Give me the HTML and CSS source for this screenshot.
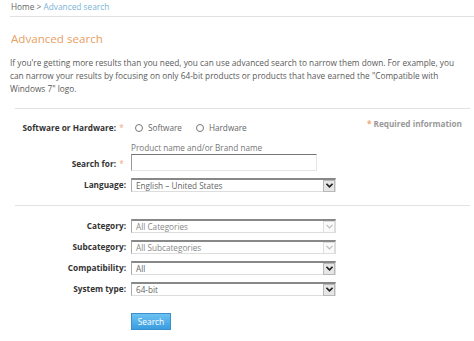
FILE: index.html
```html
<!DOCTYPE html>
<html>
<head>
<meta charset="utf-8">
<link rel="stylesheet" href="styles.css">
</head>
<body>
<div class="page">
  <div class="crumbs"><span class="home">Home</span> <span class="sep">&gt;</span> <span class="current">Advanced search</span></div>
  <h1 class="title">Advanced search</h1>
  <p class="intro">If you're getting more results than you need, you can use advanced search to narrow them down. For example, you can narrow your results by focusing on only 64-bit products or products that have earned the "Compatible with Windows 7" logo.</p>

  <div class="section first">
    <div class="required"><span class="star">*</span> Required information</div>
    <div class="form">
      <div class="label">Software or Hardware:<span class="star-slot">*</span></div>
      <div class="field radios">
        <label class="radio"><span class="dot"></span>Software</label>
        <label class="radio"><span class="dot"></span>Hardware</label>
      </div>

      <div class="label search-label">Search for:<span class="star-slot">*</span></div>
      <div class="field">
        <div class="hint">Product name and/or Brand name</div>
        <div class="text-input"></div>
      </div>

      <div class="label">Language:</div>
      <div class="field">
        <div class="select"><span class="value">English – United States</span><span class="arrow"><svg width="7" height="5" viewBox="0 0 7 5"><path d="M0.5 0.8 L3.5 3.8 L6.5 0.8" fill="none" stroke="#222" stroke-width="1.6"/></svg></span></div>
      </div>
    </div>
  </div>

  <div class="section second">
    <div class="form">
      <div class="label">Category:</div>
      <div class="field"><div class="select disabled"><span class="value">All Categories</span><span class="arrow"><svg width="7" height="5" viewBox="0 0 7 5"><path d="M0.5 0.8 L3.5 3.8 L6.5 0.8" fill="none" stroke="#bbb" stroke-width="1.2"/></svg></span></div></div>

      <div class="label">Subcategory:</div>
      <div class="field"><div class="select disabled"><span class="value">All Subcategories</span><span class="arrow"><svg width="7" height="5" viewBox="0 0 7 5"><path d="M0.5 0.8 L3.5 3.8 L6.5 0.8" fill="none" stroke="#bbb" stroke-width="1.2"/></svg></span></div></div>

      <div class="label">Compatibility:</div>
      <div class="field"><div class="select"><span class="value">All</span><span class="arrow"><svg width="7" height="5" viewBox="0 0 7 5"><path d="M0.5 0.8 L3.5 3.8 L6.5 0.8" fill="none" stroke="#222" stroke-width="1.6"/></svg></span></div></div>

      <div class="label">System type:</div>
      <div class="field"><div class="select"><span class="value">64-bit</span><span class="arrow"><svg width="7" height="5" viewBox="0 0 7 5"><path d="M0.5 0.8 L3.5 3.8 L6.5 0.8" fill="none" stroke="#222" stroke-width="1.6"/></svg></span></div></div>

      <div class="label"></div>
      <div class="field"><button class="btn">Search</button></div>
    </div>
  </div>
</div>
</body>
</html>
```
FILE: styles.css
```css
* { box-sizing: border-box; }
html, body { margin: 0; padding: 0; background: #fff; }
body { font-family: "Open Sans", "Noto Sans", sans-serif; color: #555; }
.page { width: 474px; height: 341px; overflow: hidden; padding: 1px 0 0 10px; }

.crumbs { font-size: 8.3px; line-height: 12px; padding: 0 0 3px 1px; border-bottom: 1px solid #e2e2e2; }
.crumbs .home, .crumbs .sep { color: #666; }
.crumbs .current { color: #79b4d6; }

.title { font-size: 11.6px; font-weight: normal; color: #e8a064; margin: 13px 0 0 1px; line-height: 18px; }

.intro { font-size: 8.3px; line-height: 13px; color: #5a5a5a; margin: 8px 0 0 0; width: 453px; }

.section { border-top: 1px solid #e2e2e2; margin-left: 5px; margin-right: 4px; position: relative; }
.section.first { margin-top: 13px; padding-top: 12px; }
.section.second { margin-top: 13px; padding-top: 13px; }

.required { position: absolute; right: 8px; top: 9px; font-size: 8.2px; font-weight: bold; color: #999; }
.required .star { color: #f0a878; }

.form { display: grid; grid-template-columns: 111px 205px; column-gap: 5px; row-gap: 7px; align-items: end; }
.label { font-size: 8.25px; font-weight: bold; color: #333; text-align: right; white-space: nowrap; line-height: 14px; }
.star-slot { display: inline-block; width: 11px; text-align: center; color: #f0a878; font-weight: normal; margin-right: -1px; }

.field { font-size: 8.2px; }
.radios { display: flex; gap: 14px; line-height: 14px; padding-left: 4px; }
.radio { display: flex; align-items: center; color: #666; }
.dot { width: 8px; height: 8px; border: 1px solid #777; border-radius: 50%; margin-right: 5px; }

.hint { color: #777; line-height: 12px; margin-bottom: 0; }
.text-input { width: 186px; height: 17px; border: 1px solid #e6e6e6; border-top: 1px solid #777; border-left: 1px solid #999; }

.select { display: flex; align-items: center; justify-content: space-between; width: 205px; height: 14px; border: 1px solid #ddd; border-top: 2px solid #888; border-left: 1px solid #aaa; padding-left: 4px; color: #666; line-height: 12px; }
.select.disabled { color: #888; }
.arrow { width: 12px; height: 12px; display: flex; align-items: center; justify-content: center; background: #e6e6e6; border: 1px solid #b8b8b8; }
.select.disabled .arrow { background: #fafafa; border-color: #ddd; }

.btn { margin-top: 10px; width: 40px; height: 17px; font-family: inherit; font-size: 8.4px; color: #fff; border: 1px solid #3a8fcc; background: linear-gradient(#6cc2f2, #3a9de0); padding: 0; line-height: 14px; }
```
